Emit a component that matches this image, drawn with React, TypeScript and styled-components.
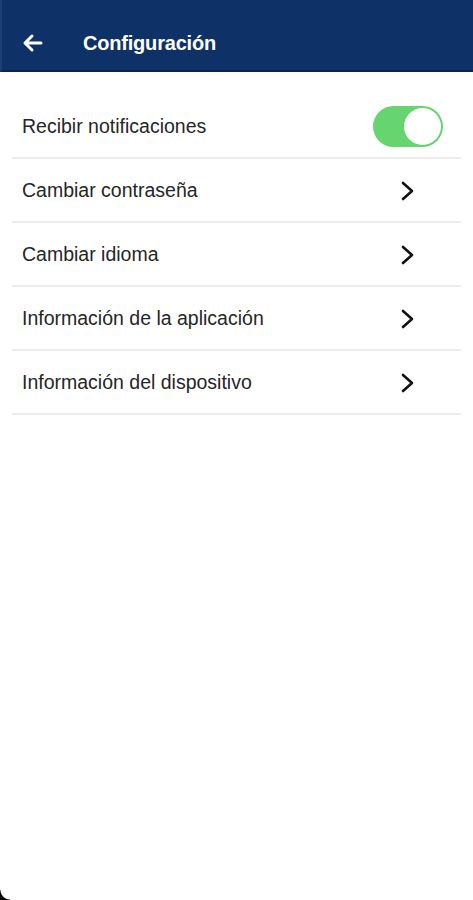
import React from "react";
import styled, { createGlobalStyle } from "styled-components";

const Global = createGlobalStyle`
  html, body { margin: 0; padding: 0; background: #ffffff; }
  body { font-family: "Liberation Sans", Arial, sans-serif; }
  * { box-sizing: border-box; }
`;

const Screen = styled.div`
  position: relative;
  width: 473px;
  height: 900px;
  background: #ffffff;
  overflow: hidden;
`;

const Header = styled.header`
  height: 72px;
  background: #0e3268;
  border-bottom: 2px solid #0a2650;
  border-left: 2px solid #1c3f74;
  display: flex;
  align-items: center;
  padding-left: 18px;
  padding-top: 16px;
`;

const BackButton = styled.button`
  width: 24px;
  height: 24px;
  padding: 0;
  border: none;
  background: transparent;
  display: flex;
  align-items: center;
  justify-content: center;
  margin-right: 39px;
`;

const Title = styled.h1`
  margin: 0;
  color: #ffffff;
  font-size: 20px;
  font-weight: 700;
  letter-spacing: -0.2px;
`;

const List = styled.ul`
  list-style: none;
  margin: 0;
  padding: 0 12px;
`;

const Row = styled.li<{ $first?: boolean }>`
  display: flex;
  align-items: center;
  justify-content: space-between;
  height: ${(p) => (p.$first ? "87px" : "64px")};
  padding: ${(p) => (p.$first ? "24px 18px 0 10px" : "1px 45px 0 10px")};
  border-bottom: 2px solid #ececec;
`;

const Label = styled.span`
  font-size: 19.5px;
  color: #262626;
`;

const Toggle = styled.div<{ $on: boolean }>`
  position: relative;
  width: 70px;
  height: 41px;
  border-radius: 21px;
  background: ${(p) => (p.$on ? "#66d46f" : "#e5e5e5")};
`;

const Knob = styled.div`
  position: absolute;
  top: 2px;
  right: 2px;
  width: 37px;
  height: 37px;
  border-radius: 50%;
  background: #ffffff;
`;

const Corner = styled.div`
  position: absolute;
  left: 0;
  bottom: 0;
  width: 10px;
  height: 10px;
  background: radial-gradient(circle at 100% 0, transparent 9px, #000 10px);
`;

const Chevron = () => (
  <svg width="16" height="22" viewBox="0 0 16 22">
    <path d="M3 3 L12 11 L3 19" fill="none" stroke="#111" strokeWidth="2.6" strokeLinecap="round" strokeLinejoin="round" />
  </svg>
);

const items = [
  "Cambiar contraseña",
  "Cambiar idioma",
  "Información de la aplicación",
  "Información del dispositivo",
];

export default function App() {
  return (
    <Screen>
      <Global />
      <Header>
        <BackButton aria-label="Volver">
          <svg width="22" height="20" viewBox="0 0 22 20">
            <path d="M20 10 H4 M11 3 L4 10 L11 17" fill="none" stroke="#fff" strokeWidth="3" strokeLinecap="round" strokeLinejoin="round" />
          </svg>
        </BackButton>
        <Title>Configuración</Title>
      </Header>
      <List>
        <Row $first>
          <Label>Recibir notificaciones</Label>
          <Toggle $on>
            <Knob />
          </Toggle>
        </Row>
        {items.map((t) => (
          <Row key={t}>
            <Label>{t}</Label>
            <Chevron />
          </Row>
        ))}
      </List>
      <Corner />
    </Screen>
  );
}
